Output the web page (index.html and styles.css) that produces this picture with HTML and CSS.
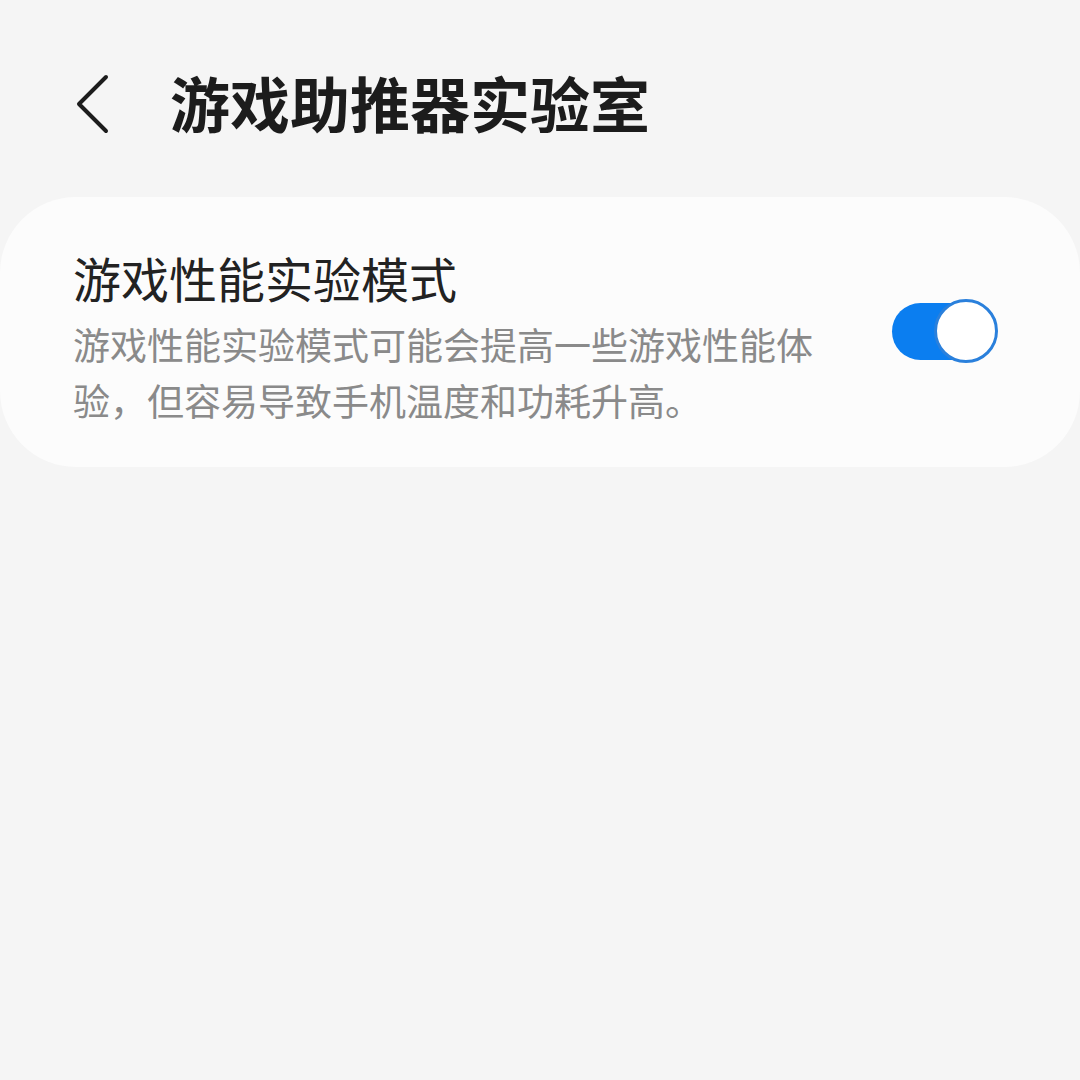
FILE: index.html
```html
<!DOCTYPE html>
<html lang="zh-CN">
<head>
<meta charset="utf-8">
<title>游戏助推器实验室</title>
<link rel="stylesheet" href="styles.css">
</head>
<body>
<div class="page">
  <header class="header">
    <div class="back">
      <svg width="40" height="60" viewBox="0 0 40 60">
        <polyline points="30,3 3,30 30,57" fill="none" stroke="#1c1c1c" stroke-width="4" stroke-linecap="round" stroke-linejoin="round"/>
      </svg>
    </div>
    <h1 class="title">游戏助推器实验室</h1>
  </header>
  <section class="card">
    <div class="card-text">
      <div class="card-title">游戏性能实验模式</div>
      <div class="card-desc">游戏性能实验模式可能会提高一些游戏性能体验，但容易导致手机温度和功耗升高。</div>
    </div>
    <div class="toggle">
      <div class="toggle-thumb"></div>
    </div>
  </section>
</div>
</body>
</html>
```
FILE: styles.css
```css
html, body {
  margin: 0;
  padding: 0;
  background: #f5f5f5;
}
body {
  font-family: "Noto Sans CJK SC", "Noto Sans", sans-serif;
  width: 1080px;
  height: 1080px;
  overflow: hidden;
}
.page {
  display: flex;
  flex-direction: column;
}
.header {
  display: flex;
  align-items: center;
  padding: 68px 0 0 76px;
  height: 68px;
}
.back {
  width: 40px;
  height: 60px;
  display: flex;
  align-items: center;
  margin-top: 4px;
}
.back svg {
  display: block;
}
.title {
  margin: 0 0 0 54px;
  font-size: 60px;
  font-weight: 700;
  color: #1c1c1c;
  line-height: 68px;
  letter-spacing: 0;
}
.card {
  margin: 61px 0 0 0;
  background: #fcfcfc;
  border-radius: 76px;
  display: flex;
  align-items: center;
  gap: 69px;
  padding: 50px 82px 39px 73px;
}
.card-text {
  flex: 1;
  min-width: 0;
}
.card-title {
  font-size: 48px;
  line-height: 60px;
  color: #222222;
}
.card-desc {
  margin-top: 9px;
  font-size: 37px;
  line-height: 56px;
  color: #8a8a8a;
}
.toggle {
  position: relative;
  width: 106px;
  height: 64px;
  flex: none;
  margin-bottom: 14px;
}
.toggle::before {
  content: "";
  position: absolute;
  left: 0;
  top: 4px;
  width: 90px;
  height: 57px;
  border-radius: 29px;
  background: #0b7ef0;
}
.toggle-thumb {
  position: absolute;
  right: 0;
  top: 0;
  width: 58px;
  height: 58px;
  border-radius: 50%;
  background: #ffffff;
  border: 3px solid #2a80dc;
}
```
